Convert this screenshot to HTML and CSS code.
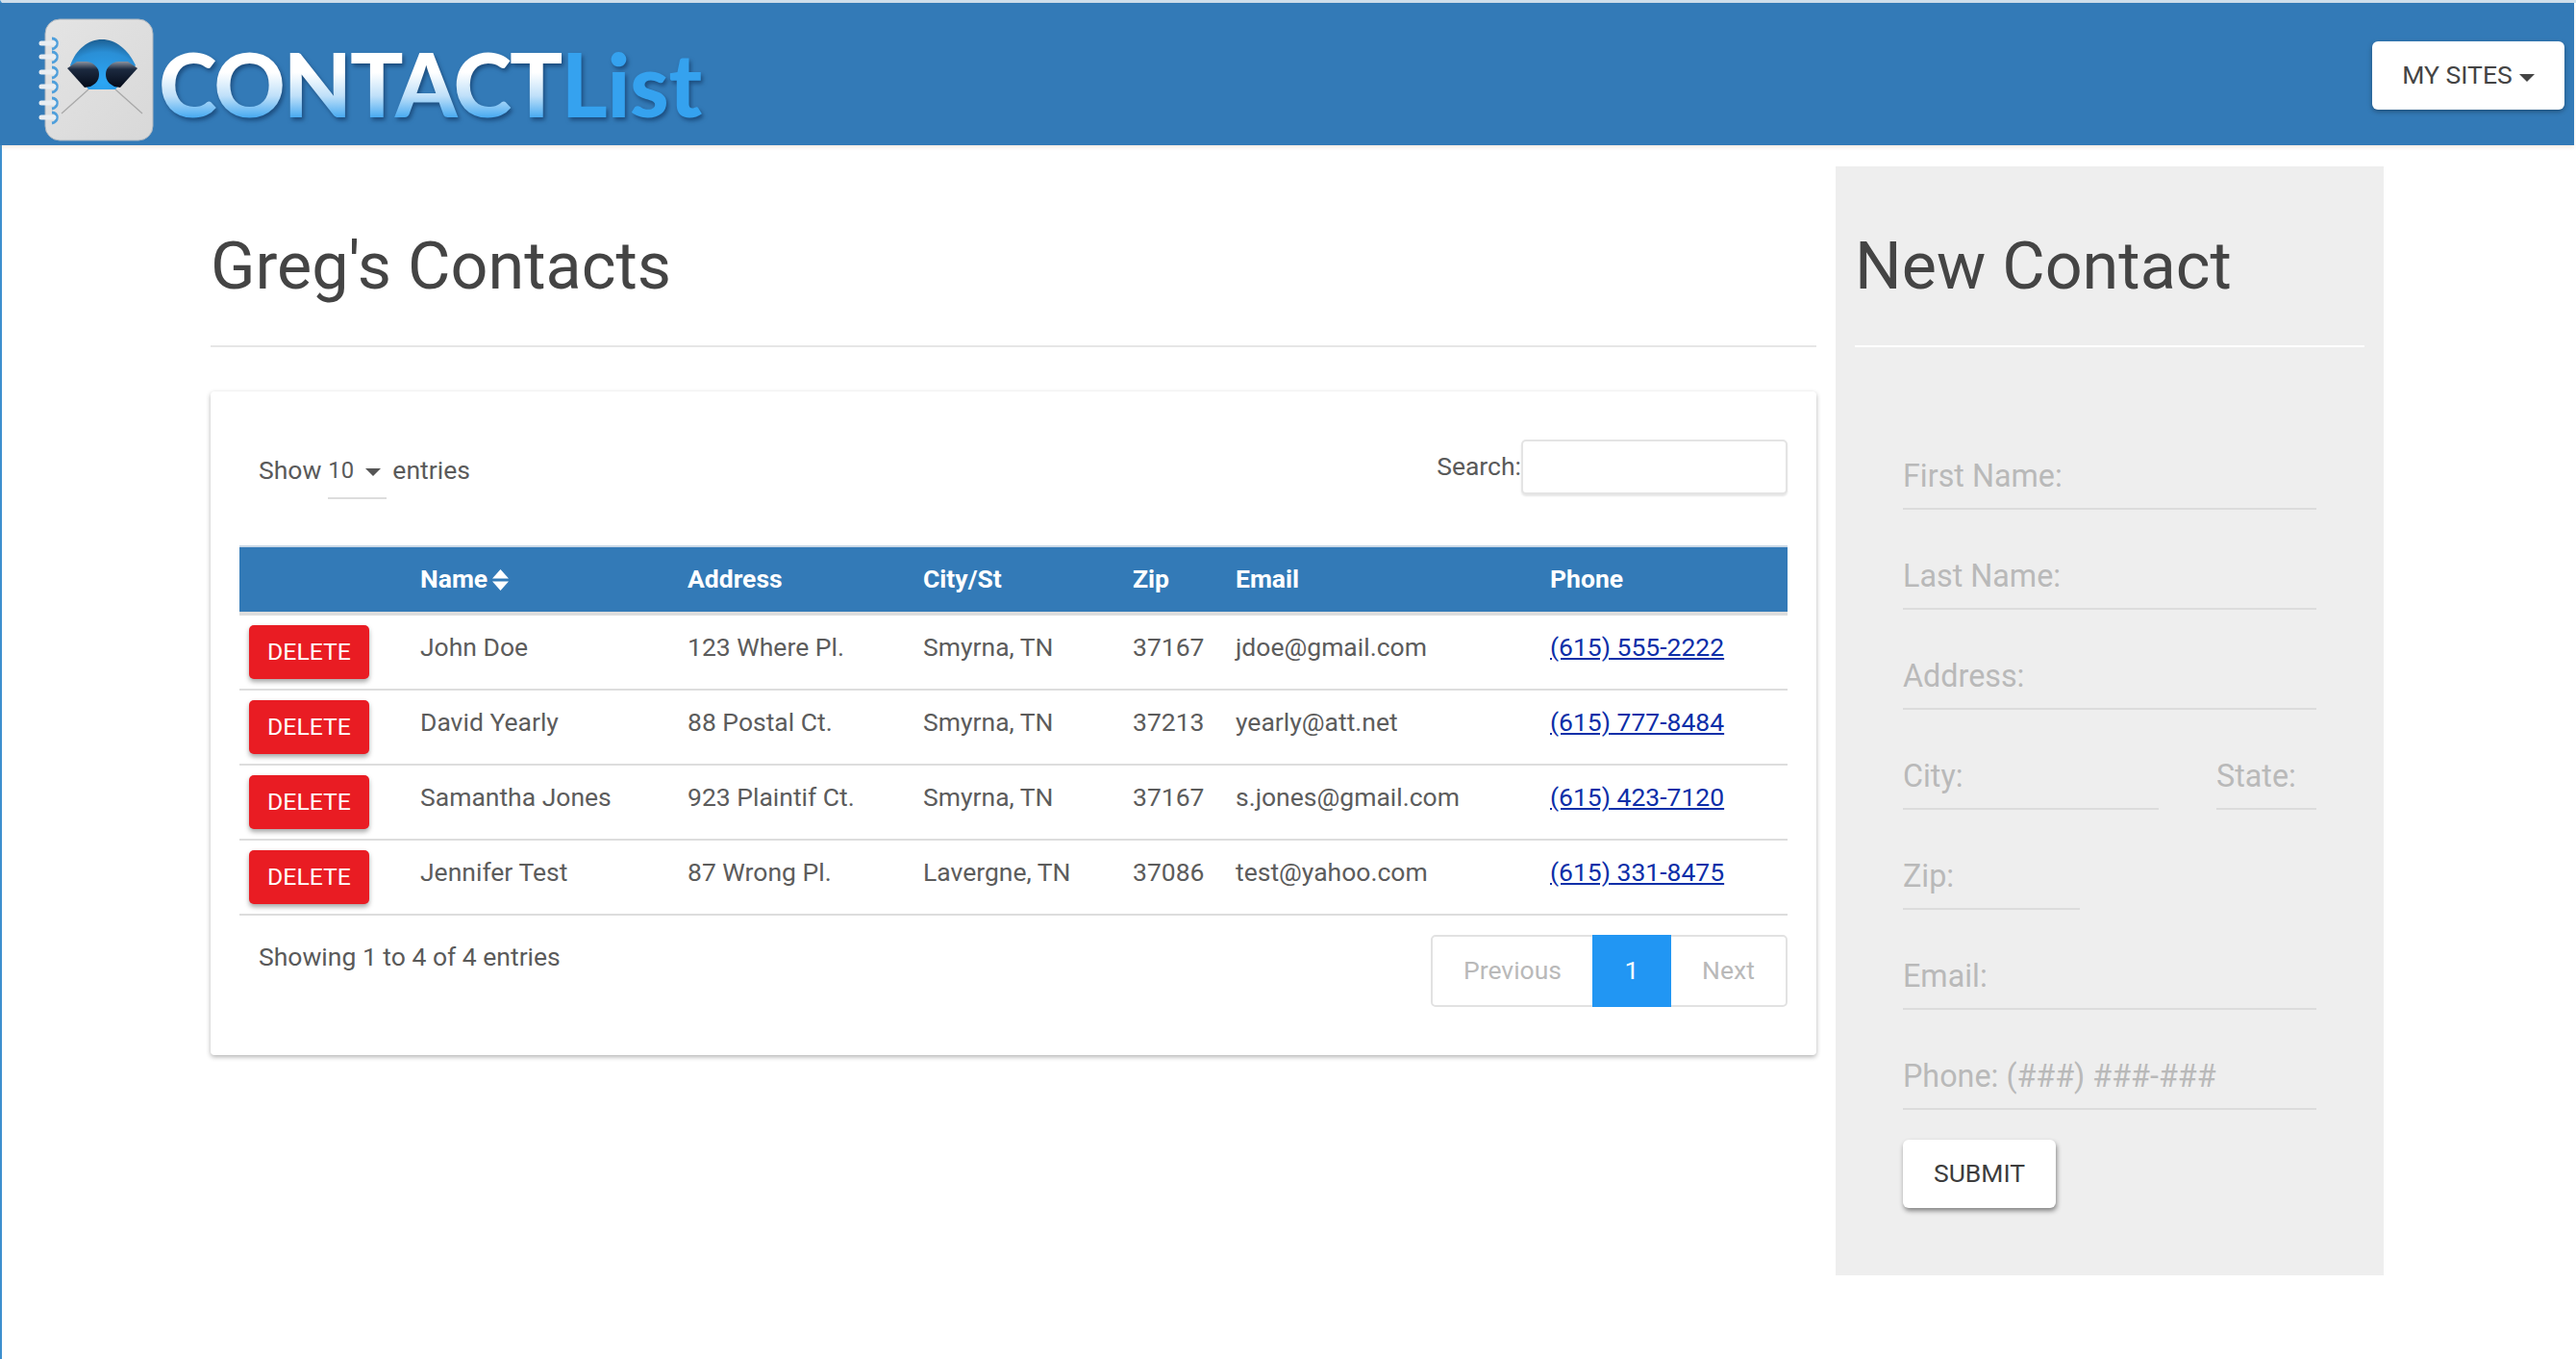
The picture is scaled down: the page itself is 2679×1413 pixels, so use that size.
FILE: index.html
```html
<!DOCTYPE html>
<html lang="en">
<head>
<meta charset="utf-8">
<title>Contact List</title>
<link rel="stylesheet" href="styles.css">
</head>
<body>
<div class="page">
  <header class="topbar">
    <a class="brand" href="#">
      <svg class="brand-icon" viewBox="38 16 130 136" width="130" height="136" aria-hidden="true">
        <defs>
          <radialGradient id="dome" cx="0.5" cy="0.85" r="0.85">
            <stop offset="0" stop-color="#2ba6f5"/>
            <stop offset="0.7" stop-color="#2a8fd6"/>
            <stop offset="1" stop-color="#1d5f92"/>
          </radialGradient>
          <linearGradient id="lens" x1="0" y1="0" x2="0" y2="1">
            <stop offset="0" stop-color="#8a93a0"/>
            <stop offset="0.3" stop-color="#1c2a40"/>
            <stop offset="1" stop-color="#040a18"/>
          </linearGradient>
          <linearGradient id="paper" x1="0" y1="0" x2="1" y2="1">
            <stop offset="0" stop-color="#e4e4e4"/>
            <stop offset="1" stop-color="#d8d8d8"/>
          </linearGradient>
        </defs>
        <rect x="47" y="20" width="112" height="126" rx="15" fill="url(#paper)" stroke="#a9b4bf" stroke-width="1"/>
        <path d="M92 93 64 118M120 93l28 25" stroke="#a9a9a9" stroke-width="1.3" fill="none"/>
        <path d="M73 68C79 51 92 41 106 41s27 10 35 27L120 93H92Z" fill="url(#dome)"/>
        <path d="M70 71 80 64h10c8 1 13 7 13 13 0 6-3 10-9 13l-6 1Z" fill="url(#lens)"/>
        <path d="M143 71 133 64h-10c-8 1-13 7-13 13 0 6 3 10 9 13l6 1Z" fill="url(#lens)"/>
        <g fill="none" stroke="#4f9fdb" stroke-width="3">
          <path d="M54 40c7 0 7 10 0 11"/>
          <path d="M54 54c7 0 7 10 0 11"/>
          <path d="M54 70c7 0 7 10 0 11"/>
          <path d="M54 85c7 0 7 10 0 11"/>
          <path d="M54 102c7 0 7 10 0 11"/>
          <path d="M54 117c7 0 7 10 0 11"/>
        </g>
        <g stroke="#e9edf1" stroke-width="5" stroke-linecap="round">
          <path d="M43 45h13M43 59h13M43 75h13M43 90h13M43 107h13M43 122h13"/>
        </g>
      </svg>
      <span class="brand-text"><span class="brand-contact">CONTACT</span><span class="brand-list">List</span></span>
    </a>
    <button class="sites-btn" type="button">MY SITES<span class="caret"></span></button>
  </header>

  <main class="layout">
    <section class="contacts">
      <h1 class="page-title">Greg's Contacts</h1>
      <div class="card">
        <div class="table-tools">
          <div class="length">
            <span>Show</span>
            <span class="length-select">10<span class="caret caret-small"></span></span>
            <span>entries</span>
          </div>
          <label class="search">Search:<input class="search-input" type="text"></label>
        </div>
        <table class="contact-table">
          <colgroup>
            <col class="c-action"><col class="c-name"><col class="c-address"><col class="c-city"><col class="c-zip"><col class="c-email"><col class="c-phone">
          </colgroup>
          <thead>
            <tr>
              <th></th>
              <th>Name <svg class="sort-icon" viewBox="0 0 17 22" width="17" height="22" aria-hidden="true"><path d="M8.5 0 17 9.500H0ZM8.500 22 0 12.500h17Z" fill="#fff"/></svg></th>
              <th>Address</th>
              <th>City/St</th>
              <th>Zip</th>
              <th>Email</th>
              <th>Phone</th>
            </tr>
          </thead>
          <tbody>
            <tr>
              <td class="action-cell"><button class="delete-btn" type="button">DELETE</button></td>
              <td>John Doe</td><td>123 Where Pl.</td><td>Smyrna, TN</td><td>37167</td><td>jdoe@gmail.com</td><td><a href="#">(615) 555-2222</a></td>
            </tr>
            <tr>
              <td class="action-cell"><button class="delete-btn" type="button">DELETE</button></td>
              <td>David Yearly</td><td>88 Postal Ct.</td><td>Smyrna, TN</td><td>37213</td><td>yearly@att.net</td><td><a href="#">(615) 777-8484</a></td>
            </tr>
            <tr>
              <td class="action-cell"><button class="delete-btn" type="button">DELETE</button></td>
              <td>Samantha Jones</td><td>923 Plaintif Ct.</td><td>Smyrna, TN</td><td>37167</td><td>s.jones@gmail.com</td><td><a href="#">(615) 423-7120</a></td>
            </tr>
            <tr>
              <td class="action-cell"><button class="delete-btn" type="button">DELETE</button></td>
              <td>Jennifer Test</td><td>87 Wrong Pl.</td><td>Lavergne, TN</td><td>37086</td><td>test@yahoo.com</td><td><a href="#">(615) 331-8475</a></td>
            </tr>
          </tbody>
        </table>
        <div class="table-footer">
          <div class="table-info">Showing 1 to 4 of 4 entries</div>
          <nav class="pager">
            <span class="pager-item pager-prev">Previous</span>
            <span class="pager-item pager-active">1</span>
            <span class="pager-item pager-next">Next</span>
          </nav>
        </div>
      </div>
    </section>

    <aside class="new-contact">
      <h1 class="page-title panel-title">New Contact</h1>
      <form class="contact-form">
        <input class="field" type="text" placeholder="First Name:">
        <input class="field" type="text" placeholder="Last Name:">
        <input class="field" type="text" placeholder="Address:">
        <div class="field-row">
          <input class="field field-city" type="text" placeholder="City:">
          <input class="field field-state" type="text" placeholder="State:">
        </div>
        <input class="field field-zip" type="text" placeholder="Zip:">
        <input class="field" type="text" placeholder="Email:">
        <input class="field field-last" type="text" placeholder="Phone: (###) ###-###">
        <button class="submit-btn" type="button">SUBMIT</button>
      </form>
    </aside>
  </main>
</div>
</body>
</html>
```
FILE: styles.css
```css
* { box-sizing: border-box; }
html, body { margin: 0; padding: 0; background: #fff; }
body {
  font-family: Roboto, "Liberation Sans", sans-serif;
  font-size: 26.5px;
  line-height: 34px;
  color: #5a5a5a;
}
.page {
  min-height: 1413px;
  border-left: 2px solid #3d8fce;
  border-top: 3px solid #cfdfec;
}
.topbar {
  height: 148px;
  margin: 0 2px 0 -2px;
  background: #337ab7;
  box-shadow: 0 2px 4px rgba(210, 150, 110, .22);
  display: flex;
  align-items: flex-start;
  justify-content: space-between;
  padding: 13px 10px 0 38px;
}
.brand { display: flex; align-items: flex-start; text-decoration: none; height: 135px; }
.brand-icon { display: block; flex: none; }
.brand-text {
  font-family: Lato, "Open Sans", sans-serif;
  font-weight: 900;
  font-size: 92px;
  line-height: 112px;
  margin: 15px 0 0 -3px;
  filter: drop-shadow(2px 3px 2px rgba(10, 40, 80, .55));
}
.brand-contact {
  letter-spacing: -2px;
  background: linear-gradient(180deg, #fff 0, #fff 40%, #bfe0f9 62%, #3da5f0 84%);
  -webkit-background-clip: text;
  background-clip: text;
  color: transparent;
}
.brand-list { color: #35a2ef; letter-spacing: -.3px; }
.sites-btn {
  width: 200px;
  height: 71px;
  margin-top: 27px;
  padding: 0 0 2px;
  border: 0;
  border-radius: 6px;
  background: #fff;
  color: #444;
  font: 400 26.5px Roboto, sans-serif;
  box-shadow: 0 2px 5px rgba(0, 0, 0, .35);
}
.caret {
  display: inline-block;
  margin-left: 7px;
  border-top: 8px solid #444;
  border-left: 8px solid transparent;
  border-right: 8px solid transparent;
  vertical-align: 2px;
}
.layout { display: flex; align-items: flex-start; gap: 20px; padding: 22px 0 0 217px; }
.contacts { width: 1670px; flex: none; }
.page-title {
  margin: 0;
  height: 188px;
  padding-top: 70px;
  font-size: 68.3px;
  line-height: 68px;
  font-weight: 400;
  color: #444;
  border-bottom: 2px solid #e6e6e6;
}
.card {
  margin-top: 46px;
  height: 690px;
  background: #fff;
  border-radius: 4px;
  box-shadow: 0 2px 5px rgba(0, 0, 0, .3);
  padding: 50px 30px;
}
.table-tools { height: 110px; display: flex; justify-content: space-between; align-items: flex-start; }
.length { display: flex; gap: 6px; padding: 15px 0 0 20px; }
.length-select {
  width: 61px;
  height: 47px;
  margin-left: 1px;
  border-bottom: 2px solid #ddd;
  display: block;
  font-size: 23.8px;
}
.caret-small { margin-left: 12px; border-top-color: #555; }
.search { display: flex; align-items: flex-start; line-height: 56px; }
.search-input {
  width: 277px;
  height: 57px;
  border: 2px solid #e4e4e4;
  border-radius: 5px;
  background: #fff;
  box-shadow: 0 2px 2px rgba(0, 0, 0, .1);
}
.contact-table { width: 1610px; table-layout: fixed; border-collapse: separate; border-spacing: 0; }
.c-action { width: 178px; }
.c-name { width: 278px; }
.c-address { width: 245px; }
.c-city { width: 218px; }
.c-zip { width: 107px; }
.c-email { width: 327px; }
.c-phone { width: 257px; }
.contact-table th {
  height: 73px;
  padding: 0 10px 2px;
  background: #337ab7;
  border-top: 2px solid #c9d8e6;
  border-bottom: 4px solid #ddd;
  color: #fff;
  font-weight: 700;
  text-align: left;
}
.sort-icon { display: inline-block; vertical-align: -3px; margin-left: -2px; }
.contact-table td {
  height: 78px;
  padding: 16px 10px 0;
  vertical-align: top;
  border-bottom: 2px solid #ddd;
  color: #5c5c5c;
}
.contact-table td.action-cell { padding-top: 10px; }
.contact-table a { color: #0d2fa8; }
.delete-btn {
  display: block;
  width: 125px;
  height: 56px;
  padding: 0 0 2px;
  border: 0;
  border-radius: 5px;
  background: #e91c23;
  color: #fff;
  font: 400 24.8px Roboto, sans-serif;
  box-shadow: 0 3px 5px rgba(0, 0, 0, .35);
}
.table-footer { display: flex; justify-content: space-between; align-items: flex-start; margin-top: 20px; }
.table-info { padding: 6px 0 0 20px; }
.pager {
  display: flex;
  width: 371px;
  height: 75px;
  border: 2px solid #e2e2e2;
  border-radius: 5px;
}
.pager-item { display: flex; align-items: center; justify-content: center; padding-bottom: 2px; color: #b9b9b9; }
.pager-prev { width: 166px; }
.pager-active { width: 82px; margin: -2px 0; background: #2196f3; color: #fff; }
.pager-next { flex: 1; }
.new-contact {
  width: 570px;
  height: 1153px;
  flex: none;
  background: #eee;
  padding: 0 20px;
}
.panel-title { border-bottom-color: #fff; }
.contact-form { padding: 0 50px; display: flex; flex-direction: column; align-items: flex-start; }
.field {
  display: block;
  width: 100%;
  height: 62px;
  margin-top: 42px;
  padding: 0 0 6px;
  border: 0;
  border-bottom: 2px solid #dcdcdc;
  background: transparent;
  font: 400 32.3px Roboto, sans-serif;
  color: #444;
}
.contact-form > .field:first-child { margin-top: 107px; }
.field::placeholder { color: #b9b9b9; opacity: 1; }
.field-row { display: flex; justify-content: space-between; width: 100%; }
.field-city { width: 266px; }
.field-state { width: 104px; }
.field-zip { width: 184px; }
.submit-btn {
  width: 159px;
  height: 71px;
  margin-top: 31px;
  padding: 0 0 2px;
  border: 0;
  border-radius: 6px;
  background: #fff;
  color: #3d3d3d;
  font: 400 26.5px Roboto, sans-serif;
  box-shadow: 1px 3px 5px rgba(0, 0, 0, .45);
}
```
